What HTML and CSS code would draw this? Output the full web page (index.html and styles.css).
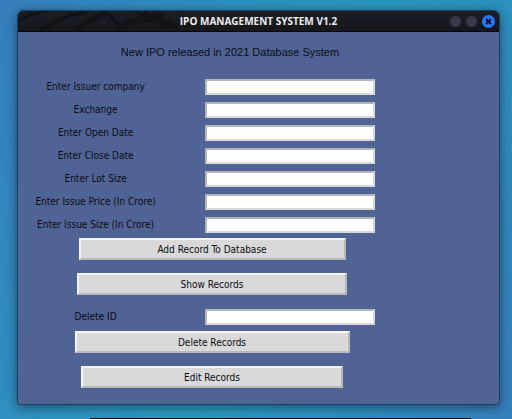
FILE: index.html
```html
<!DOCTYPE html>
<html lang="en">
<head>
<meta charset="utf-8">
<title>IPO MANAGEMENT SYSTEM V1.2</title>
<link rel="stylesheet" href="styles.css">
</head>
<body>
<main class="window">
  <header class="titlebar">
    <svg class="dragon" viewBox="0 0 170 20" aria-hidden="true">
      <g fill="none" stroke="#111217">
        <path d="M0 10C10 4 19 1 31 0" stroke-width="2"/>
        <path d="M22 19C36 10 50 4 68 1" stroke-width="4"/>
        <path d="M56 20C66 12 75 7 88 3" stroke-width="5"/>
        <path d="M84 0C92 3 95 10 103 15" stroke-width="4"/>
      </g>
      <path fill="#111217" d="M95 20C101 11 110 7 124 5L116 0L126 3L125 0L137 4L135 0L148 4L142 6L157 12L162 19L152 16L145 18L141 12L128 12C116 12 110 14 106 20Z"/>
    </svg>
    <h1 class="title">IPO MANAGEMENT SYSTEM V1.2</h1>
    <div class="controls">
      <button class="control" type="button" aria-label="Minimize"></button>
      <button class="control" type="button" aria-label="Maximize"></button>
      <button class="control close" type="button" aria-label="Close">
        <svg viewBox="0 0 13 13" aria-hidden="true"><path d="M4 4L9 9M9 4L4 9"/></svg>
      </button>
    </div>
  </header>
  <form class="panel">
    <h2 class="heading">New IPO released in 2021 Database System</h2>
    <div class="fields">
      <label for="issuer">Enter Issuer company</label><input id="issuer" type="text">
      <label for="exchange">Exchange</label><input id="exchange" type="text">
      <label for="open">Enter Open Date</label><input id="open" type="text">
      <label for="close">Enter Close Date</label><input id="close" type="text">
      <label for="lot">Enter Lot Size</label><input id="lot" type="text">
      <label for="price">Enter Issue Price (In Crore)</label><input id="price" type="text">
      <label for="size">Enter Issue Size (In Crore)</label><input id="size" type="text">
    </div>
    <div class="actions">
      <button class="action add" type="button">Add Record To Database</button>
      <button class="action show" type="button">Show Records</button>
    </div>
    <div class="fields">
      <label for="delete-id">Delete ID</label><input id="delete-id" type="text">
    </div>
    <div class="actions">
      <button class="action delete" type="button">Delete Records</button>
      <button class="action edit" type="button">Edit Records</button>
    </div>
  </form>
</main>
<div class="next-window"></div>
</body>
</html>
```

FILE: styles.css
```css
* {
  box-sizing: border-box;
}

body {
  margin: 0;
  min-height: 100vh;
  display: flex;
  flex-direction: column;
  padding: 10px 12px 0 17px;
  background: linear-gradient(115deg, #377fbc 0%, #2e93bf 35%, #2b9abd 55%, #2e90bf 75%, #367fbb 100%);
  font-family: "DejaVu Sans Condensed", "DejaVu Sans", sans-serif;
  font-size: 10px;
  color: #0a0c12;
}

.window {
  flex: 1;
  display: flex;
  flex-direction: column;
  border: 1px solid #1d3f5e;
  border-radius: 6px 6px 3px 3px;
  background: #506395;
  box-shadow: 0 2px 12px rgba(0, 20, 40, 0.55);
}

.titlebar {
  position: relative;
  display: flex;
  align-items: center;
  justify-content: center;
  height: 21px;
  border-bottom: 1px solid #050608;
  border-radius: 5px 5px 0 0;
  background: linear-gradient(#1c1e26, #15171d);
  overflow: hidden;
}

.dragon {
  position: absolute;
  left: 0;
  top: 0;
  width: 170px;
  height: 20px;
}

.title {
  position: relative;
  margin: 0;
  font-family: "Open Sans", sans-serif;
  font-size: 10px;
  font-weight: 700;
  line-height: 20px;
  color: #eeeeee;
}

.controls {
  position: absolute;
  right: 4px;
  top: 4px;
  display: flex;
  align-items: center;
  gap: 5px;
}

.control {
  width: 11px;
  height: 11px;
  padding: 0;
  border: 0;
  border-radius: 50%;
  background: #373b48;
}

.close {
  width: 13px;
  height: 13px;
  background: #2777ff;
}

.close svg {
  display: block;
  fill: none;
  stroke: #10131c;
  stroke-width: 2;
}

.panel {
  display: flex;
  flex-direction: column;
  width: 100%;
  max-width: 388px;
}

.heading {
  margin: 12px 0 19px;
  padding-left: 36px;
  font-family: "Liberation Sans", sans-serif;
  font-size: 11px;
  font-weight: 400;
  line-height: 16px;
  text-align: center;
}

.fields {
  display: grid;
  grid-template-columns: 2fr 3fr;
  grid-auto-rows: 16px;
  row-gap: 7px;
  align-items: center;
  justify-items: center;
}

.fields label {
  line-height: 16px;
}

.fields input {
  width: 170px;
  height: 16px;
  padding: 0 2px;
  border: 2px solid;
  border-color: #b4b4b8 #d9d9d9 #d9d9d9 #b4b4b8;
  background: #ffffff;
  font: inherit;
}

.actions {
  display: flex;
  flex-direction: column;
  align-items: center;
  gap: 13px;
  margin: 5px 0 14px;
}

.fields + .actions:last-child {
  margin: 6px 0 16px;
}

.action {
  height: 22px;
  padding: 0;
  border: 2px solid;
  border-color: #f4f4f4 #b9b9b9 #b9b9b9 #f4f4f4;
  background: #d9d9d9;
  color: inherit;
  font: inherit;
}

.add {
  width: 267px;
}

.show {
  width: 270px;
}

.delete {
  width: 275px;
}

.edit {
  width: 262px;
}

.next-window {
  height: 1px;
  margin: 13px 29px 0 73px;
  background: #05080b;
}
```
